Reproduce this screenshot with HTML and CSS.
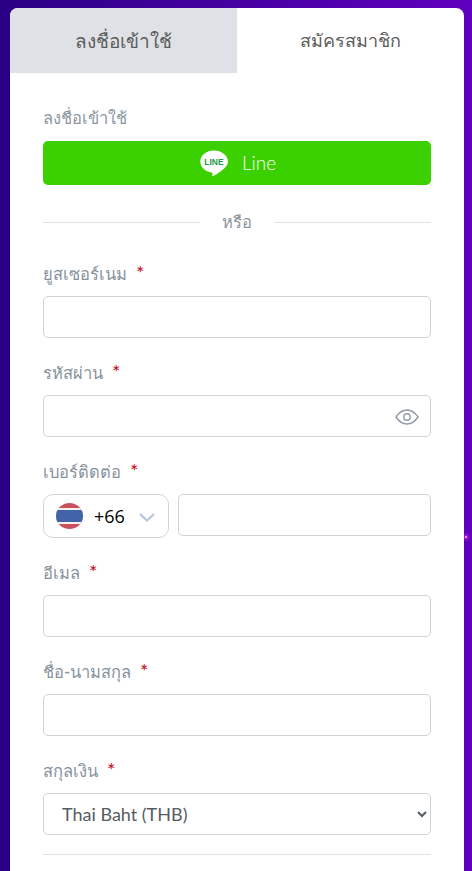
FILE: index.html
```html
<!DOCTYPE html>
<html lang="th">
<head>
    <meta charset="UTF-8">
    <meta name="viewport" content="width=device-width, initial-scale=1.0">
    <title>สมัครสมาชิก</title>
    <link rel="stylesheet" href="styles.css">
</head>
<body>
    <span class="sparkle"></span>
    <div class="card">
        <div class="tabs">
            <div class="tab tab-off">ลงชื่อเข้าใช้</div>
            <div class="tab">สมัครสมาชิก</div>
        </div>
        <form class="form">
            <div class="social-label">ลงชื่อเข้าใช้</div>
            <button type="button" class="line-btn">
                <svg class="line-icon" width="28" height="27" viewBox="0 0 28 27">
                    <path d="M14 0.5C6.4 0.5 0.3 5.4 0.3 11.6c0 5.5 4.9 10.1 11.4 11 1 .2.9 .7 .7 1.9-.1 .6-.5 2.3 1.3 1.4 1.9-.9 10.300-5.900 12.800-10.100 1-1.400 1.500-2.800 1.500-4.200C27.700 5.400 21.600 .5 14 .5z" fill="#fff"/>
                    <text x="14" y="15" text-anchor="middle" class="line-word">LINE</text>
                </svg>
                <span class="line-text">Line</span>
            </button>
            <div class="or-row"><span>หรือ</span></div>

            <div class="field">
                <label class="label">ยูสเซอร์เนม <em>*</em></label>
                <input type="text" class="input">
            </div>
            <div class="field">
                <label class="label">รหัสผ่าน <em>*</em></label>
                <div class="pass-wrap">
                    <input type="password" class="input">
                    <svg class="eye" width="24" height="16" viewBox="0 0 24 16" fill="none" stroke="#8f9ba6" stroke-width="1.4">
                        <path d="M1 8C4 3.500 7.700 1 12 1s8 2.500 11 7c-3 4.500-6.700 7-11 7S4 12.500 1 8z"/>
                        <circle cx="12" cy="8" r="3.200"/>
                    </svg>
                </div>
            </div>
            <div class="field">
                <label class="label">เบอร์ติดต่อ <em>*</em></label>
                <div class="phone-row">
                    <div class="dial">
                        <svg width="27" height="26" viewBox="0 0 27 26">
                            <defs><clipPath id="flagClip"><ellipse cx="13.500" cy="13" rx="13.500" ry="13"/></clipPath></defs>
                            <g clip-path="url(#flagClip)">
                                <rect width="27" height="26" fill="#c9505c"/>
                                <rect y="5" width="27" height="16" fill="#f2f2f4"/>
                                <rect y="7" width="27" height="12" fill="#4063a9"/>
                            </g>
                        </svg>
                        <span class="dial-code">+66</span>
                        <svg class="dial-arrow" width="16" height="9" viewBox="0 0 16 9" fill="none" stroke="#b9c5dc" stroke-width="2.200">
                            <path d="M1 1l7 6.500L15 1"/>
                        </svg>
                    </div>
                    <input type="tel" class="input">
                </div>
            </div>
            <div class="field">
                <label class="label">อีเมล <em>*</em></label>
                <input type="email" class="input">
            </div>
            <div class="field">
                <label class="label">ชื่อ-นามสกุล <em>*</em></label>
                <input type="text" class="input">
            </div>
            <div class="field">
                <label class="label">สกุลเงิน <em>*</em></label>
                <select class="input currency">
                    <option>Thai Baht (THB)</option>
                </select>
            </div>
            <hr class="rule">
        </form>
    </div>
</body>
</html>
```

FILE: styles.css
```css
html, body {
    height: 100%;
}

body {
    margin: 0;
    padding: 8px 8px 0 10px;
    box-sizing: border-box;
    overflow: hidden;
    font-family: Lato, "Noto Sans", sans-serif;
    background: linear-gradient(90deg, #2a0084 0%, #6000bf 100%);
}

/* star from the page background, sits behind the card */
.sparkle {
    position: absolute;
    z-index: -1;
    left: 465px;
    top: 536px;
    width: 2px;
    height: 2px;
    background: #ff80ff;
    box-shadow: 0 0 3px 1px #d030e0;
}

.card {
    background: #fff;
    border-radius: 8px 8px 0 0;
    overflow: hidden;
    height: 900px;
}

.tabs {
    display: flex;
    height: 65px;
}

.tab {
    flex: 1;
    display: flex;
    align-items: center;
    justify-content: center;
    font-size: 18px;
    font-weight: 500;
    color: #5c5c5c;
}

.tab-off {
    background: #dee2e6;
    font-size: 19px;
}

.form {
    padding: 33px 33px 0;
}

.social-label {
    font-size: 16.500px;
    line-height: 24px;
    color: #8b96a0;
    margin-bottom: 11px;
}

.line-btn {
    width: 100%;
    height: 44px;
    border: none;
    border-radius: 5px;
    background: #3bd000;
    color: #fff;
    font-family: inherit;
    font-size: 19px;
    font-weight: 300;
    display: flex;
    align-items: center;
    justify-content: center;
    gap: 14px;
    padding: 0 0 0 2px;
}

.line-text {
    margin-top: -2px;
}

.line-word {
    font-family: "Liberation Sans", sans-serif;
    font-size: 8.500px;
    font-weight: 700;
    fill: #1f9a47;
}

.or-row {
    display: flex;
    align-items: center;
    gap: 22px;
    margin: 25px 0 28px;
    color: #8b96a0;
    font-size: 16.500px;
    line-height: 24px;
}

.or-row::before,
.or-row::after {
    content: "";
    flex: 1;
    border-top: 1px solid #dee2e6;
}

.field {
    margin-bottom: 23px;
}

.field:last-of-type {
    margin-bottom: 19px;
}

.label {
    display: block;
    font-size: 16.500px;
    line-height: 24px;
    font-weight: 500;
    color: #87929c;
    margin-bottom: 10px;
}

.label em {
    font-style: normal;
    font-size: 19px;
    line-height: 0;
    color: #c8102e;
    margin-left: 5px;
}

.input {
    display: block;
    width: 100%;
    height: 42px;
    box-sizing: border-box;
    border: 1px solid #ced4da;
    border-radius: 5px;
    background: #fff;
    font-family: inherit;
    outline: none;
}

.pass-wrap {
    position: relative;
}

.eye {
    position: absolute;
    right: 12px;
    top: 14px;
}

.phone-row {
    display: flex;
    gap: 9px;
}

.dial {
    flex: 0 0 126px;
    height: 44px;
    box-sizing: border-box;
    border: 1px solid #ced4da;
    border-radius: 10px;
    display: flex;
    align-items: center;
    padding-left: 12px;
    color: #000;
}

.dial-code {
    margin-left: 11px;
    font-family: "Open Sans", sans-serif;
    font-size: 18px;
}

.dial-arrow {
    margin-left: 14px;
    margin-top: 3px;
}

.currency {
    color: #555c63;
    font-size: 18px;
    padding-left: 14px;
}

.rule {
    border: none;
    border-top: 1px solid #dee2e6;
    margin: 0;
}
```
